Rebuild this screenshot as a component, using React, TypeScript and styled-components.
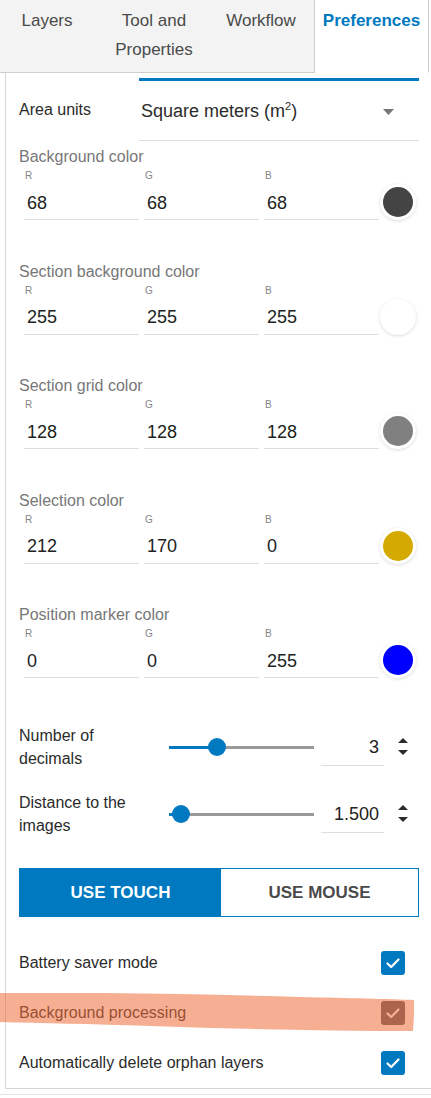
import React from "react";
import styled, { createGlobalStyle } from "styled-components";

const BLUE = "#0079c1";

const Global = createGlobalStyle`
  html, body { margin: 0; padding: 0; background: #fff; }
  body { font-family: "Liberation Sans", Arial, Helvetica, sans-serif; color: #2f2f2f; }
  * { box-sizing: border-box; }
`;

const Page = styled.div`
  width: 431px;
  padding-bottom: 5px;
  border-bottom: 1px solid #e6e6e6;
`;

const TabBar = styled.div`
  display: grid;
  grid-template-columns: 94px 120px 101px 114px 2px;
  height: 73px;
`;

const Tab = styled.div<{ $active?: boolean; $edge?: boolean; $pl?: number; $pr?: number }>`
  background: ${(p) => (p.$active ? "#fff" : "#f3f3f3")};
  border-bottom: 1px solid ${(p) => (p.$active ? "#fff" : "#cfcfcf")};
  border-right: ${(p) => (p.$edge ? "1px solid #cfcfcf" : "none")};
  padding: 6px ${(p) => p.$pr ?? 8}px 0 ${(p) => p.$pl ?? 8}px;
  text-align: center;
  font-size: 17px;
  line-height: 29px;
  color: ${(p) => (p.$active ? BLUE : "#4a4a4a")};
  font-weight: ${(p) => (p.$active ? 700 : 400)};
`;

const Panel = styled.div`
  margin-left: 5px;
  border-left: 1px solid #d6d6d6;
  border-bottom: 1px solid #d6d6d6;
  padding: 5px 12px 0 13px;
`;

const SelectRow = styled.div`
  display: grid;
  grid-template-columns: 120px 1fr;
  align-items: center;
`;

const RowLabel = styled.div`
  font-size: 16px;
  line-height: 23px;
  color: #2b2b2b;
`;

const Select = styled.div`
  height: 63px;
  border-top: 3px solid ${BLUE};
  border-bottom: 1px solid #dedede;
  display: flex;
  align-items: center;
  justify-content: space-between;
  padding: 2px 25px 0 2px;
  font-size: 18px;
  color: #2b2b2b;
  sup {
    font-size: 11px;
    vertical-align: 7px;
    line-height: 0;
  }
`;

const ColorSection = styled.div`
  padding: 7px 0 35.5px;
`;

const SectionTitle = styled.div`
  font-size: 16px;
  line-height: 18px;
  color: #777;
`;

const Fields = styled.div`
  display: flex;
  align-items: flex-end;
  gap: 5px;
  margin-top: 4px;
  padding-left: 5px;
`;

const Field = styled.div`
  width: 115px;
  display: flex;
  flex-direction: column;
`;

const ChannelLabel = styled.div`
  font-size: 10px;
  line-height: 11px;
  color: #858585;
  padding-left: 1px;
`;

const ValueInput = styled.input`
  width: 100%;
  height: 39px;
  border: none;
  border-bottom: 1px solid #dedede;
  font-family: inherit;
  font-size: 18px;
  color: #222;
  padding: 6px 0 0 3px;
  background: transparent;
  outline: none;
`;

const Swatch = styled.div<{ $color: string }>`
  width: 30px;
  height: 30px;
  border-radius: 50%;
  background: ${(p) => p.$color};
  box-shadow: 0 0 0 3px #fff, 0 1px 4px 2px rgba(0, 0, 0, 0.22);
  margin: 0 0 3px -1px;
  flex: none;
`;

const SliderGroup = styled.div`
  display: flex;
  flex-direction: column;
  gap: 20px;
  padding-top: 10px;
`;

const SliderRow = styled.div`
  display: grid;
  grid-template-columns: 143px 145px 63px 24px;
  column-gap: 7px;
  align-items: center;
  height: 47px;
`;

const Track = styled.div`
  position: relative;
  height: 3px;
  background: #9a9a9a;
`;

const Fill = styled.div`
  position: absolute;
  left: 0;
  top: 0;
  bottom: 0;
  background: ${BLUE};
`;

const Thumb = styled.div`
  position: absolute;
  top: 50%;
  width: 18px;
  height: 18px;
  border-radius: 50%;
  background: ${BLUE};
  transform: translate(-50%, -50%);
`;

const NumberBox = styled.input`
  width: 100%;
  height: 37px;
  border: none;
  border-bottom: 1px solid #dedede;
  text-align: right;
  padding: 2px 5px 0 0;
  font-family: inherit;
  font-size: 18px;
  color: #222;
  background: transparent;
  outline: none;
`;

const SpinnerBox = styled.div`
  display: flex;
  justify-content: center;
  align-items: center;
`;

const ButtonGroup = styled.div`
  margin-top: 30.5px;
  display: grid;
  grid-template-columns: 201px 1fr;
  height: 49px;
  border: 1px solid ${BLUE};
`;

const ModeButton = styled.button<{ $active?: boolean }>`
  border: none;
  margin: 0;
  background: ${(p) => (p.$active ? BLUE : "#fff")};
  color: ${(p) => (p.$active ? "#fff" : "#4a4a4a")};
  font-family: inherit;
  font-size: 17px;
  font-weight: 700;
  text-transform: uppercase;
  display: flex;
  align-items: center;
  justify-content: center;
`;

const CheckList = styled.div`
  margin-top: 21px;
`;

const CheckRow = styled.div`
  position: relative;
  height: 50px;
  display: flex;
  align-items: center;
  justify-content: space-between;
  padding-right: 14px;
  font-size: 16px;
  color: #2b2b2b;
`;

const Box = styled.div<{ $disabled?: boolean }>`
  width: 24px;
  height: 24px;
  border-radius: 3px;
  background: ${(p) => (p.$disabled ? "#5c5a62" : BLUE)};
  display: flex;
  align-items: center;
  justify-content: center;
`;

const Highlight = styled.svg`
  position: absolute;
  left: -19px;
  top: 5px;
  width: 415px;
  height: 41px;
  pointer-events: none;
`;

const colors = [
  { title: "Background color", r: 68, g: 68, b: 68 },
  { title: "Section background color", r: 255, g: 255, b: 255 },
  { title: "Section grid color", r: 128, g: 128, b: 128 },
  { title: "Selection color", r: 212, g: 170, b: 0 },
  { title: "Position marker color", r: 0, g: 0, b: 255 },
];

const sliders = [
  { label: ["Number of", "decimals"], pct: 33, value: "3" },
  { label: ["Distance to the", "images"], pct: 8.3, value: "1.500" },
];

const checks = [
  { label: "Battery saver mode" },
  { label: "Background processing", disabled: true },
  { label: "Automatically delete orphan layers" },
];

function Caret() {
  return (
    <svg width="11" height="6" viewBox="0 0 11 6">
      <polygon points="0,0 11,0 5.5,6" fill="#777" />
    </svg>
  );
}

function Spinner() {
  return (
    <svg width="10" height="18" viewBox="0 0 10 18">
      <polygon points="0,5 5,0 10,5" fill="#2b2b2b" />
      <polygon points="0,12 10,12 5,17" fill="#2b2b2b" />
    </svg>
  );
}

function Check() {
  return (
    <svg width="16" height="16" viewBox="0 0 16 16">
      <polyline points="2.5,8.5 6.2,12 13.5,4.5" fill="none" stroke="#fff" strokeWidth="2.2" strokeLinecap="round" strokeLinejoin="round" />
    </svg>
  );
}

export default function App() {
  return (
    <Page>
      <Global />
      <TabBar>
        <Tab>Layers</Tab>
        <Tab>Tool and Properties</Tab>
        <Tab $edge $pr={14}>Workflow</Tab>
        <Tab $active $edge $pl={3} $pr={3}>Preferences</Tab>
        <div />
      </TabBar>
      <Panel>
        <SelectRow>
          <RowLabel>Area units</RowLabel>
          <Select>
            <span>
              Square meters (m<sup>2</sup>)
            </span>
            <Caret />
          </Select>
        </SelectRow>
        {colors.map((c) => (
          <ColorSection key={c.title}>
            <SectionTitle>{c.title}</SectionTitle>
            <Fields>
              {(["R", "G", "B"] as const).map((ch) => (
                <Field key={ch}>
                  <ChannelLabel>{ch}</ChannelLabel>
                  <ValueInput defaultValue={String(c[ch.toLowerCase() as "r" | "g" | "b"])} />
                </Field>
              ))}
              <Swatch $color={`rgb(${c.r}, ${c.g}, ${c.b})`} />
            </Fields>
          </ColorSection>
        ))}
        <SliderGroup>
          {sliders.map((s) => (
            <SliderRow key={s.value}>
              <RowLabel>
                {s.label[0]}
                <br />
                {s.label[1]}
              </RowLabel>
              <Track>
                <Fill style={{ width: `${s.pct}%` }} />
                <Thumb style={{ left: `${s.pct}%` }} />
              </Track>
              <NumberBox defaultValue={s.value} />
              <SpinnerBox>
                <Spinner />
              </SpinnerBox>
            </SliderRow>
          ))}
        </SliderGroup>
        <ButtonGroup>
          <ModeButton $active>Use touch</ModeButton>
          <ModeButton>Use mouse</ModeButton>
        </ButtonGroup>
        <CheckList>
          {checks.map((c) => (
            <CheckRow key={c.label}>
              <span>{c.label}</span>
              <Box $disabled={c.disabled}>
                <Check />
              </Box>
              {c.disabled && (
                <Highlight viewBox="0 0 415 41" preserveAspectRatio="none">
                  <path
                    d="M0,0 C90,-1 200,1 300,4 C350,5 390,6 414,7 L414,22 L413,38 C330,38 240,36 150,33 C90,31 40,30 0,29 Z"
                    fill="rgba(240,110,60,0.55)"
                  />
                </Highlight>
              )}
            </CheckRow>
          ))}
        </CheckList>
      </Panel>
    </Page>
  );
}
